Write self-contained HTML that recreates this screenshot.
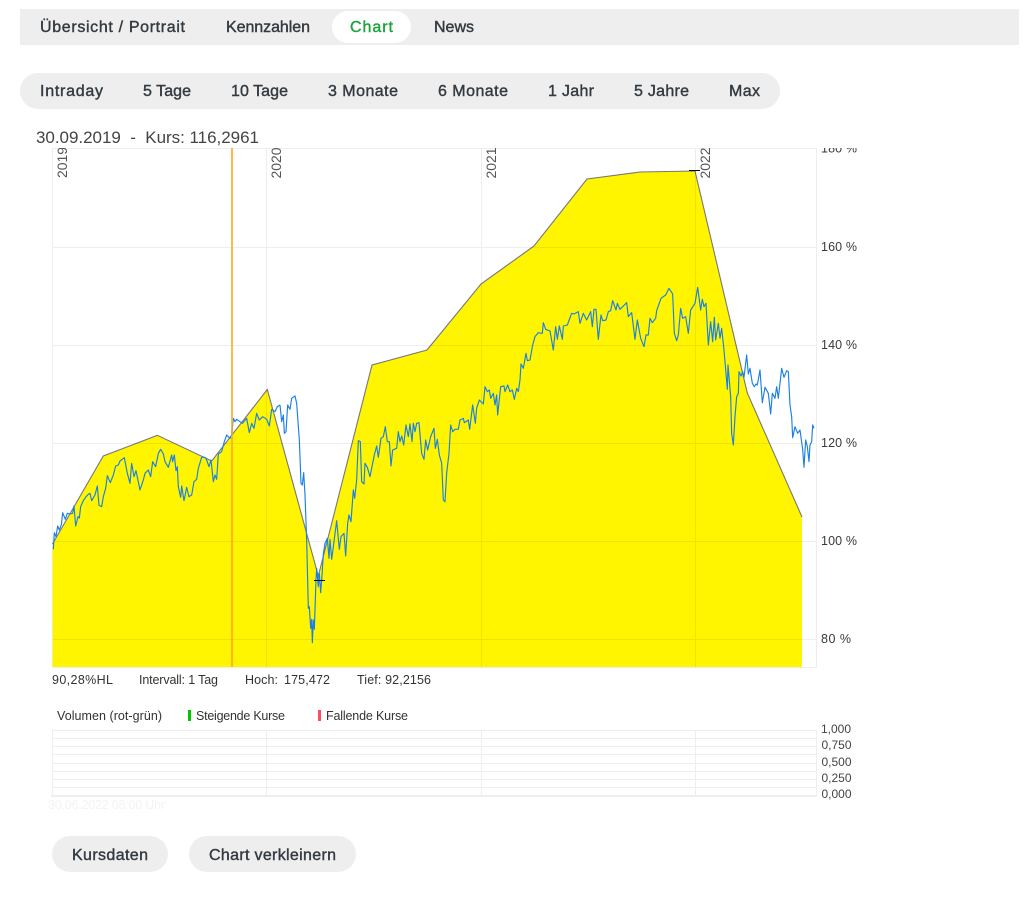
<!DOCTYPE html>
<html lang="de"><head><meta charset="utf-8"><title>Chart</title>
<style>
html,body{margin:0;padding:0;background:#fff;width:1033px;height:910px;overflow:hidden}
svg{display:block;font-family:"Liberation Sans",sans-serif}
.t{font-size:16px;fill:#333a40;stroke:#333a40;stroke-width:.4px}
.i{font-size:12.5px;fill:#333}
.a{font-size:12.5px;fill:#3a3a3a}
.v{font-size:12px;fill:#444}
.y{font-size:14px;fill:#555}
.b{fill:none;stroke:#1a80e6;stroke-width:1.15;stroke-linejoin:round;vector-effect:non-scaling-stroke}
.g{stroke:#000;stroke-opacity:.065;stroke-width:1}
</style></head><body>
<svg width="1033" height="910" viewBox="0 0 1033 910">
<defs><clipPath id="c"><rect x="0" y="148" width="1033" height="31"/></clipPath></defs>

<rect x="20" y="9" width="999" height="36" fill="#eee"/>
<rect x="332" y="11" width="79" height="32" rx="16" fill="#fff"/>
<text class="t" x="40" y="32" textLength="145" lengthAdjust="spacing">Übersicht / Portrait</text>
<text class="t" x="226" y="32" textLength="84" lengthAdjust="spacing">Kennzahlen</text>
<text class="t" x="350" y="32" textLength="43" lengthAdjust="spacing" style="fill:#1aa53c;stroke:#1aa53c">Chart</text>
<text class="t" x="434" y="32" textLength="40" lengthAdjust="spacing">News</text>

<rect x="20" y="73" width="760" height="36" rx="18" fill="#eee"/>
<text class="t" x="40" y="96" textLength="63" lengthAdjust="spacing">Intraday</text>
<text class="t" x="143" y="96" textLength="48" lengthAdjust="spacing">5 Tage</text>
<text class="t" x="231" y="96" textLength="57" lengthAdjust="spacing">10 Tage</text>
<text class="t" x="328" y="96" textLength="70" lengthAdjust="spacing">3 Monate</text>
<text class="t" x="438" y="96" textLength="70" lengthAdjust="spacing">6 Monate</text>
<text class="t" x="548" y="96" textLength="46" lengthAdjust="spacing">1 Jahr</text>
<text class="t" x="634" y="96" textLength="55" lengthAdjust="spacing">5 Jahre</text>
<text class="t" x="729" y="96" textLength="31" lengthAdjust="spacing">Max</text>

<text x="36" y="143" font-size="17" fill="#444" textLength="223" lengthAdjust="spacing" xml:space="preserve">30.09.2019  -  Kurs: 116,2961</text>

<!-- plot frame -->
<path d="M52.5 148.5H816.5V667.5H52.5Z" fill="#fff" stroke="#eee"/>

<!-- yellow area -->
<polygon points="52.5,667 52.5,544 103.3,456 157.3,435.3 211.7,461 267.3,389.5 318.3,576 372,365 427,350 481,284 534,246 587,179 640,172 695,171 747.3,393 802,517 802,667" fill="#fff500"/>
<polyline points="52.5,544 103.3,456 157.3,435.3 211.7,461 267.3,389.5 318.3,576 372,365 427,350 481,284 534,246 587,179 640,172 695,171 747.3,393 802,517" fill="none" stroke="#777" stroke-width="1.1"/>

<!-- grid -->
<path class="g" d="M53 247.5H816M53 345.5H816M53 443.5H816M53 541.5H816M53 639.5H816M266.5 149V667M481.5 149V667M695.5 149V667"/>

<!-- blue line -->
<g transform="translate(40 380) scale(.33333)">
<polyline class="b" points="40,508 43,458 48,470 53,438 58,450 64,434 68,398 76,418 82,400 90,402 98,400 102,378 107,438 114,410 118,414 122,380 130,362 138,350 146,342 150,340 155,362 165,345 172,318 177,376 185,380 190,350 197,325 202,287 211,308 220,285 227,258 235,255 240,243 253,233 262,280 270,310 275,250 282,290 288,272 300,330 310,300 315,280 325,270 332,290 338,245 347,260 355,220 362,208 370,222 375,245 385,262 395,225 398,245 403,225 408,272 412,260 415,320 422,352 425,318 432,362 440,322 447,350 455,345 462,305 470,298 475,265 485,232 495,232 500,240 507,260 513,240 520,305 525,285 530,298 535,222 545,215 552,188 560,165 570,175 575,165 580,115 585,125 590,118 600,125 607,130 620,115 628,158 635,130 642,145 650,100 658,120 668,110 680,118 688,138 695,88 705,95 712,80 720,75"/>
</g>
<g transform="translate(280 380) scale(.33333)">
<polyline class="b" points="0,75 5,125 10,105 13,160 18,155 23,75 30,88 35,55 45,48 50,70 58,180 63,310 67,315 71,278 75,345 80,480 85,685 88,680 92,745 95,718 97,788 100,720 103,748 108,600 110,565 115,620 118,580 122,638 125,600 130,522 135,490 142,475 147,535 150,478 155,538 160,500 170,422 178,508 183,470 192,460 197,528 203,430 207,405 213,425 220,330 224,355 230,300 235,182 241,185 245,305 252,312 255,250 262,262 270,290 283,225 290,198 295,232 303,175 310,170 316,140 322,185 328,185 333,258 338,210 350,205 355,155 360,185 365,168 371,195 378,135 385,170 390,132 396,185 400,130 405,155 410,130 417,128 425,220 432,238 437,180 443,210 452,170 462,145 466,205 472,178 478,225 485,250 490,360 495,365 500,280 507,220 512,135 518,155 525,148 535,148 540,120 550,115 553,128 565,120 569,148 578,75 586,130 590,85 598,60 610,72 615,20 622,35 628,30 632,55 640,40 645,75 650,45 653,105 662,20 672,18 675,35 683,15 690,35 697,30 703,58 710,25 715,35 720,0"/>
</g>
<g transform="translate(520 270) scale(.33333)">
<polyline class="b" points="0,330 3,282 10,295 18,250 22,272 30,270 38,225 45,200 55,188 67,190 70,158 77,178 90,183 100,240 107,170 112,208 118,168 127,208 130,168 142,165 155,130 162,132 175,125 180,160 190,130 200,150 212,125 217,170 222,118 228,118 235,208 243,135 248,152 258,150 265,125 272,122 278,92 288,120 292,100 300,118 310,108 320,98 325,140 335,128 345,208 352,150 362,205 372,230 378,195 385,195 390,145 397,158 407,145 410,122 423,85 437,75 447,55 458,72 463,190 470,212 475,195 482,115 488,145 497,140 505,190 512,120 525,100 533,52 542,120 547,88 552,110 558,100 565,225 572,155 578,215 583,142 587,210 595,160 600,205 605,175 612,240 622,358 624,285 632,380 635,490 640,525 645,440 650,380 655,370 657,305 663,318 668,305 672,322 680,255 685,312 690,295 697,340 703,350 708,342 712,345 720,300 727,398 735,352 745,370 752,432 757,370 765,385 770,350 775,385 785,295 792,322 800,302 805,305 810,405 815,440 818,503 825,470 833,490 840,480 848,538 852,592 857,510 862,530 867,575 870,525 875,515 878,465 882,475"/>
</g>

<!-- orange marker and hi/lo ticks -->
<rect x="231" y="148" width="2" height="519" fill="#ffa820" fill-opacity=".8"/>
<path d="M314 580.5H325M689 170.5H700" stroke="#000" stroke-width="1"/>

<!-- year labels -->
<g clip-path="url(#c)">
<text class="y" transform="translate(67 178) rotate(-90)" textLength="31" lengthAdjust="spacing">2019</text>
<text class="y" transform="translate(281 178.500) rotate(-90)" textLength="31" lengthAdjust="spacing">2020</text>
<text class="y" transform="translate(496 178.500) rotate(-90)" textLength="31" lengthAdjust="spacing">2021</text>
<text class="y" transform="translate(710 178.500) rotate(-90)" textLength="31" lengthAdjust="spacing">2022</text>
<text class="a" x="821" y="152.500" textLength="36" lengthAdjust="spacing">180 %</text>
</g>

<!-- y axis labels -->
<text class="a" x="821" y="251" textLength="36" lengthAdjust="spacing">160 %</text>
<text class="a" x="821" y="349" textLength="36" lengthAdjust="spacing">140 %</text>
<text class="a" x="821" y="447" textLength="36" lengthAdjust="spacing">120 %</text>
<text class="a" x="821" y="545" textLength="36" lengthAdjust="spacing">100 %</text>
<text class="a" x="821" y="643" textLength="30" lengthAdjust="spacing">80 %</text>

<!-- info row -->
<text class="i" x="52" y="684" textLength="61" lengthAdjust="spacing">90,28%HL</text>
<text class="i" x="139" y="684" textLength="79" lengthAdjust="spacing">Intervall: 1 Tag</text>
<text class="i" x="245" y="684" textLength="33" lengthAdjust="spacing">Hoch:</text>
<text class="i" x="284" y="684" textLength="46" lengthAdjust="spacing">175,472</text>
<text class="i" x="357" y="684" textLength="74" lengthAdjust="spacing">Tief: 92,2156</text>

<!-- legend -->
<text class="i" x="57" y="720" textLength="105" lengthAdjust="spacing">Volumen (rot-grün)</text>
<rect x="188" y="710" width="3" height="11" fill="#00c800"/>
<text class="i" x="196" y="720" textLength="89" lengthAdjust="spacing">Steigende Kurse</text>
<rect x="318" y="710" width="3" height="11" fill="#ff4d5e"/>
<text class="i" x="326" y="720" textLength="82" lengthAdjust="spacing">Fallende Kurse</text>

<!-- volume grid -->
<path d="M52 730.500H816.500V796M52 738.500H816.500M52 746.500H816.500M52 754.500H816.500M52 763.500H816.500M52 771.500H816.500M52 779.500H816.500M52 787.500H816.500M52.500 730V796M266.500 730V796M481.500 730V796M695.500 730V796" fill="none" stroke="#eee"/>
<rect x="51" y="795" width="766" height="2" fill="#eee"/>
<text class="v" x="821" y="733" textLength="30" lengthAdjust="spacing">1,000</text>
<text class="v" x="821.500" y="749" textLength="30" lengthAdjust="spacing">0,750</text>
<text class="v" x="821.500" y="766" textLength="30" lengthAdjust="spacing">0,500</text>
<text class="v" x="821.500" y="782" textLength="30" lengthAdjust="spacing">0,250</text>
<text class="v" x="821.500" y="798" textLength="30" lengthAdjust="spacing">0,000</text>
<text x="48" y="809" font-size="12.500" fill="#f3f3f3" textLength="117" lengthAdjust="spacing">30.06.2022 08:00 Uhr</text>

<!-- buttons -->
<rect x="52" y="836" width="116" height="36" rx="18" fill="#eee"/>
<text class="t" x="72" y="860" textLength="76" lengthAdjust="spacing">Kursdaten</text>
<rect x="189" y="836" width="167" height="36" rx="18" fill="#eee"/>
<text class="t" x="209" y="860" textLength="127" lengthAdjust="spacing">Chart verkleinern</text>
</svg>
</body></html>
